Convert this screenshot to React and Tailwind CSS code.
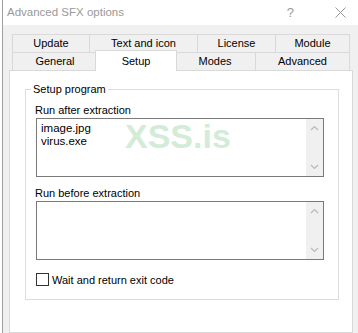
import { useState } from "react";

const font = { fontFamily: '"Liberation Sans", Arial, sans-serif' };

function Chevron({ up, color = "#b9b9b9" }) {
  return (
    <svg width="9" height="6" viewBox="0 0 9 6">
      <path
        d={up ? "M1 5 L4.5 1.5 L8 5" : "M1 1 L4.5 4.5 L8 1"}
        fill="none"
        stroke={color}
        strokeWidth="1.2"
      />
    </svg>
  );
}

function ListBox({ lines = [] }) {
  return (
    <div className="flex h-[59px] w-[288px] border border-[#7a7a7a] bg-white">
      <div className="flex-1 pl-[4px] pt-[3px] text-[11.5px] leading-[13px] text-black">
        {lines.map((l) => (
          <div key={l}>{l}</div>
        ))}
      </div>
      <div className="flex w-[17px] flex-col items-center justify-between bg-[#f0f0f0] py-[6px]">
        <Chevron up />
        <Chevron />
      </div>
    </div>
  );
}

export default function App() {
  const [wait, setWait] = useState(false);

  const row1 = [
    ["Update", 77],
    ["Text and icon", 108],
    ["License", 78],
    ["Module", 75],
  ];

  return (
    <div className="flex h-[333px] w-[358px] overflow-hidden bg-white" style={font}>
      <div className="w-[2px] bg-white" />
      <div className="w-px bg-[#a0a0a0]" />
      <div className="flex flex-1 flex-col">
        {/* title bar */}
        <div className="flex h-[25px] items-center bg-white pl-[4px] text-[11.5px] text-[#999999]">
          <span>Advanced SFX options</span>
          <span className="ml-auto mr-[41px] text-[13px]">?</span>
          <svg width="11" height="11" viewBox="0 0 11 11" className="mr-[12px]">
            <path d="M0.5 0.5 L10.5 10.5 M10.5 0.5 L0.5 10.5" stroke="#999" strokeWidth="1" />
          </svg>
        </div>

        <div className="flex flex-1 flex-col bg-[#f0f0f0] pl-[6px] pr-[5px] pt-[9px]">
          {/* tabs */}
          <div className="ml-[3px] w-[338px] text-[11px] text-black">
            <div className="flex h-[18px]">
              {row1.map(([t, w], i) => (
                <div
                  key={t}
                  style={{ width: w }}
                  className={`flex items-center justify-center border-t border-l border-[#d9d9d9] ${
                    i === row1.length - 1 ? "border-r" : ""
                  }`}
                >
                  {t}
                </div>
              ))}
            </div>
            <div className="flex h-[18px]">
              <div className="flex w-[85px] items-center justify-center border-t border-l border-[#d9d9d9]">
                General
              </div>
              <div className="relative z-10 -mx-[2px] -mt-[2px] -mb-px flex h-[21px] w-[82px] items-start justify-center border border-b-0 border-[#d9d9d9] bg-white pt-[2px]">
                Setup
              </div>
              <div className="flex w-[80px] items-center justify-center border-t border-[#d9d9d9]">
                Modes
              </div>
              <div className="flex w-[95px] items-center justify-center border-t border-l border-r border-[#d9d9d9]">
                Advanced
              </div>
            </div>
          </div>

          {/* panel */}
          <div className="relative flex-1 border border-[#d9d9d9] bg-white pl-[15px] pt-[18px]">
            <div className="relative h-[211px] w-[314px] border border-[#dcdcdc] pl-[10px] pt-[13px] text-[11px] text-black">
              <span className="absolute -top-[8px] left-[5px] bg-white px-[2px] leading-[14px]">
                Setup program
              </span>
              <div className="-ml-px h-[14px] leading-[14px]">Run after extraction</div>
              <div className="mt-px">
                <ListBox lines={["image.jpg", "virus.exe"]} />
              </div>
              <div className="-ml-px mt-[9px] h-[14px] leading-[14px]">Run before extraction</div>
              <div className="mt-px">
                <ListBox />
              </div>
              <label className="mt-[13px] flex h-[13px] items-center">
                <span
                  onClick={() => setWait(!wait)}
                  className="flex h-[13px] w-[13px] items-center justify-center border border-[#333333] bg-white"
                >
                  {wait && (
                    <svg width="9" height="9" viewBox="0 0 9 9">
                      <path d="M1 4.5 L3.5 7 L8 1.5" fill="none" stroke="#000" strokeWidth="1.4" />
                    </svg>
                  )}
                </span>
                <span className="ml-[3px] leading-[14px]">Wait and return exit code</span>
              </label>
            </div>

            <div
              className="pointer-events-none absolute left-[115px] top-[48px] text-[34px] font-bold leading-none text-[#d3ecd8]"
              style={{ fontFamily: '"Liberation Sans", Arial, sans-serif' }}
            >
              XSS.is
            </div>
          </div>
        </div>
      </div>
    </div>
  );
}
